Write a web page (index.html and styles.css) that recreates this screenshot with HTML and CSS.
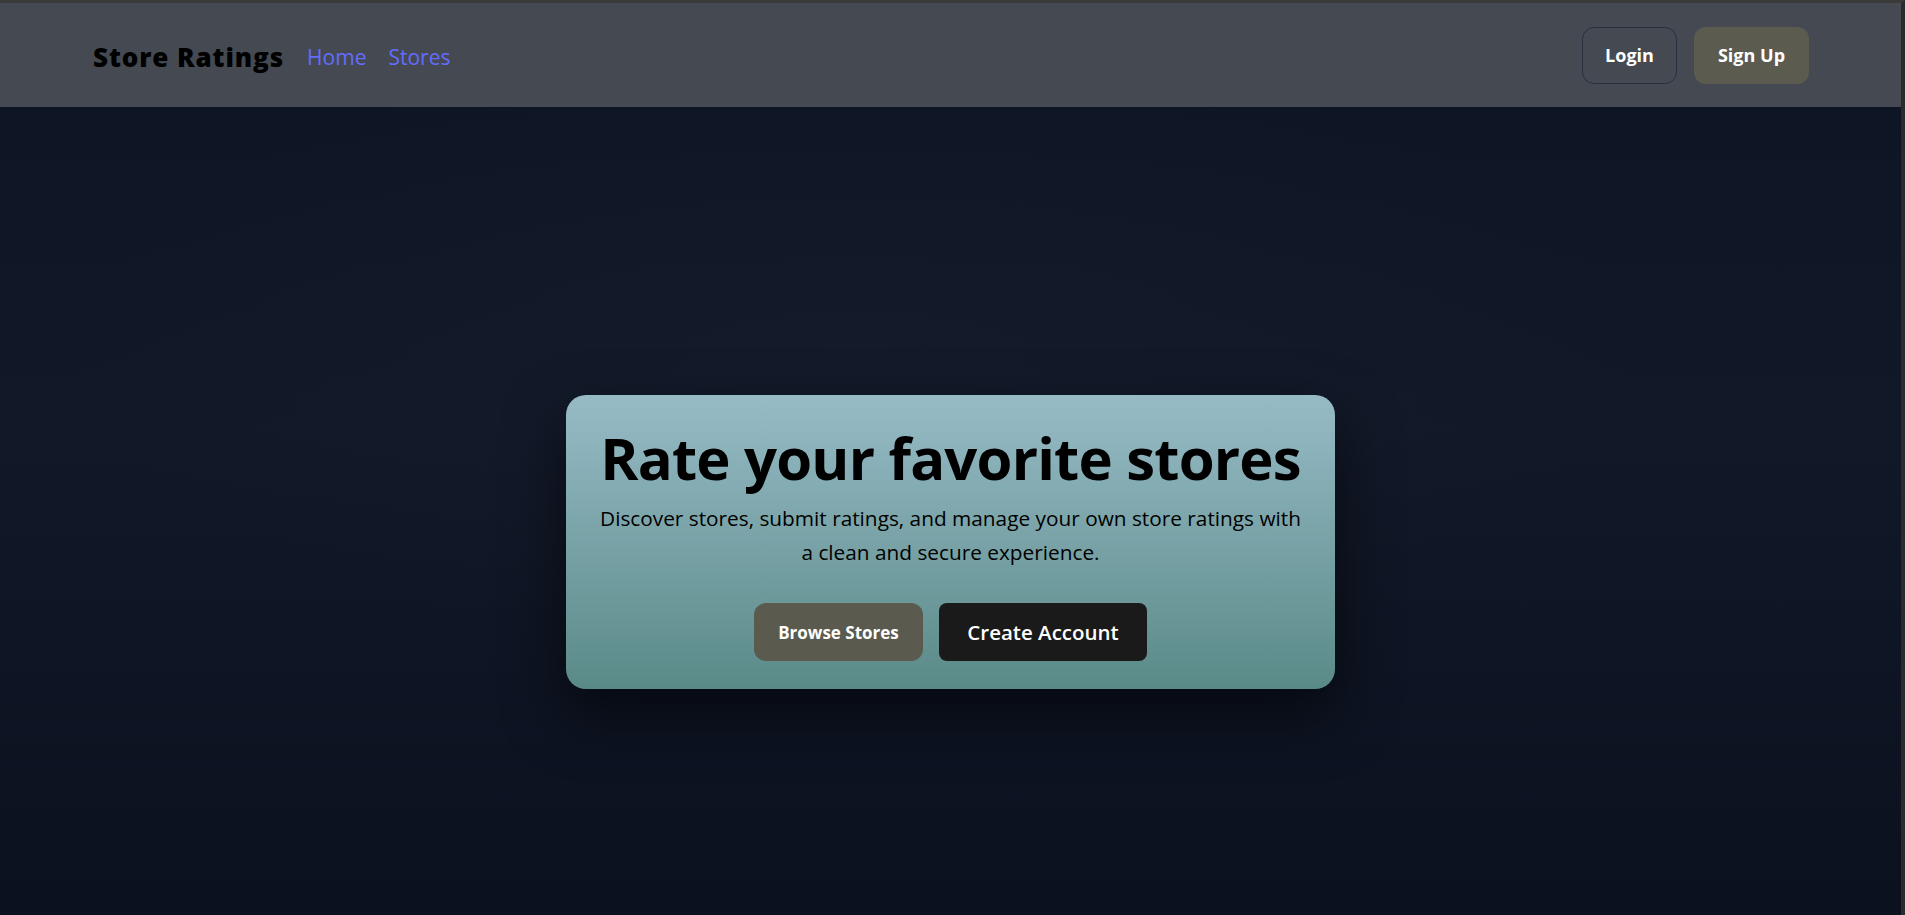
FILE: index.html
```html
<!DOCTYPE html>
<html lang="en">
<head>
<meta charset="utf-8">
<title>Store Ratings</title>
<link rel="stylesheet" href="styles.css">
</head>
<body>
<div class="frame">
  <header class="topbar">
    <div class="brand-group">
      <span class="brand">Store Ratings</span>
      <nav class="nav">
        <a class="nav-link" href="#">Home</a>
        <a class="nav-link" href="#">Stores</a>
      </nav>
    </div>
    <div class="auth">
      <button class="btn-login">Login</button>
      <button class="btn-signup">Sign Up</button>
    </div>
  </header>
  <main class="main">
    <section class="hero">
      <h1 class="hero-title">Rate your favorite stores</h1>
      <p class="hero-text">Discover stores, submit ratings, and manage your own store ratings with a clean and secure experience.</p>
      <div class="hero-actions">
        <button class="btn-browse">Browse Stores</button>
        <button class="btn-create">Create Account</button>
      </div>
    </section>
  </main>
</div>
</body>
</html>
```
FILE: styles.css
```css
html, body {
  margin: 0;
  padding: 0;
  height: 100%;
  overflow: hidden;
}
body {
  font-family: "Open Sans", "Noto Sans", sans-serif;
  background: #0c1220;
}
.frame {
  box-sizing: border-box;
  height: 915px;
  border-top: 3px solid #3a3a3a;
  border-right: 4px solid #2b2b2b;
  display: flex;
  flex-direction: column;
}
.topbar {
  height: 104px;
  flex: none;
  background: #454a52;
  display: flex;
  align-items: center;
  justify-content: space-between;
  padding: 0 92px 0 93px;
}
.brand-group {
  display: flex;
  align-items: center;
  gap: 23px;
  padding-top: 4px;
}
.brand {
  font-size: 26px;
  font-weight: 800;
  color: #000;
  letter-spacing: 0.9px;
}
.nav {
  display: flex;
  gap: 22px;
}
.nav-link {
  color: #646cff;
  text-decoration: none;
  font-size: 21px;
  font-weight: 500;
}
.auth {
  display: flex;
  gap: 17px;
}
.btn-login, .btn-signup, .btn-browse, .btn-create {
  font-family: inherit;
  color: #fff;
  cursor: pointer;
  box-sizing: border-box;
  padding: 0;
}
.btn-login {
  width: 95px;
  height: 57px;
  background: transparent;
  border: 1px solid #27303f;
  border-radius: 12px;
  font-size: 18px;
  font-weight: 700;
}
.btn-signup {
  width: 115px;
  height: 57px;
  background: #5b5c4f;
  border: none;
  border-radius: 12px;
  font-size: 18px;
  font-weight: 700;
}
.main {
  flex: 1;
  background:
    radial-gradient(ellipse 55% 50% at 45% 30%, rgba(28, 36, 54, 0.25), rgba(0, 0, 0, 0) 75%),
    linear-gradient(180deg, #0e1524 0%, #111827 40%, #0b111f 100%);
  display: flex;
  justify-content: center;
  align-items: flex-start;
  padding-top: 288px;
  box-sizing: border-box;
}
.hero {
  box-sizing: border-box;
  width: 769px;
  height: 294px;
  padding: 30px 20px 0;
  border-radius: 20px;
  background: linear-gradient(180deg, #97bbc6 0%, #5a8a88 100%);
  box-shadow: 0 24px 60px rgba(0, 0, 0, 0.6);
  text-align: center;
}
.hero-title {
  margin: 0;
  font-size: 58px;
  line-height: 66px;
  font-weight: 700;
  color: #000;
  letter-spacing: -0.8px;
}
.hero-text {
  margin: 10px auto 0;
  width: 705px;
  font-size: 20.8px;
  line-height: 34px;
  color: #000;
}
.hero-actions {
  margin-top: 34px;
  display: flex;
  justify-content: center;
  gap: 16px;
}
.btn-browse {
  width: 169px;
  height: 58px;
  background: #5a5b4e;
  border: none;
  border-radius: 12px;
  font-size: 17px;
  font-weight: 700;
}
.btn-create {
  width: 208px;
  height: 58px;
  background: #1a1a1a;
  border: none;
  border-radius: 8px;
  font-size: 20.5px;
  font-weight: 600;
}
```
